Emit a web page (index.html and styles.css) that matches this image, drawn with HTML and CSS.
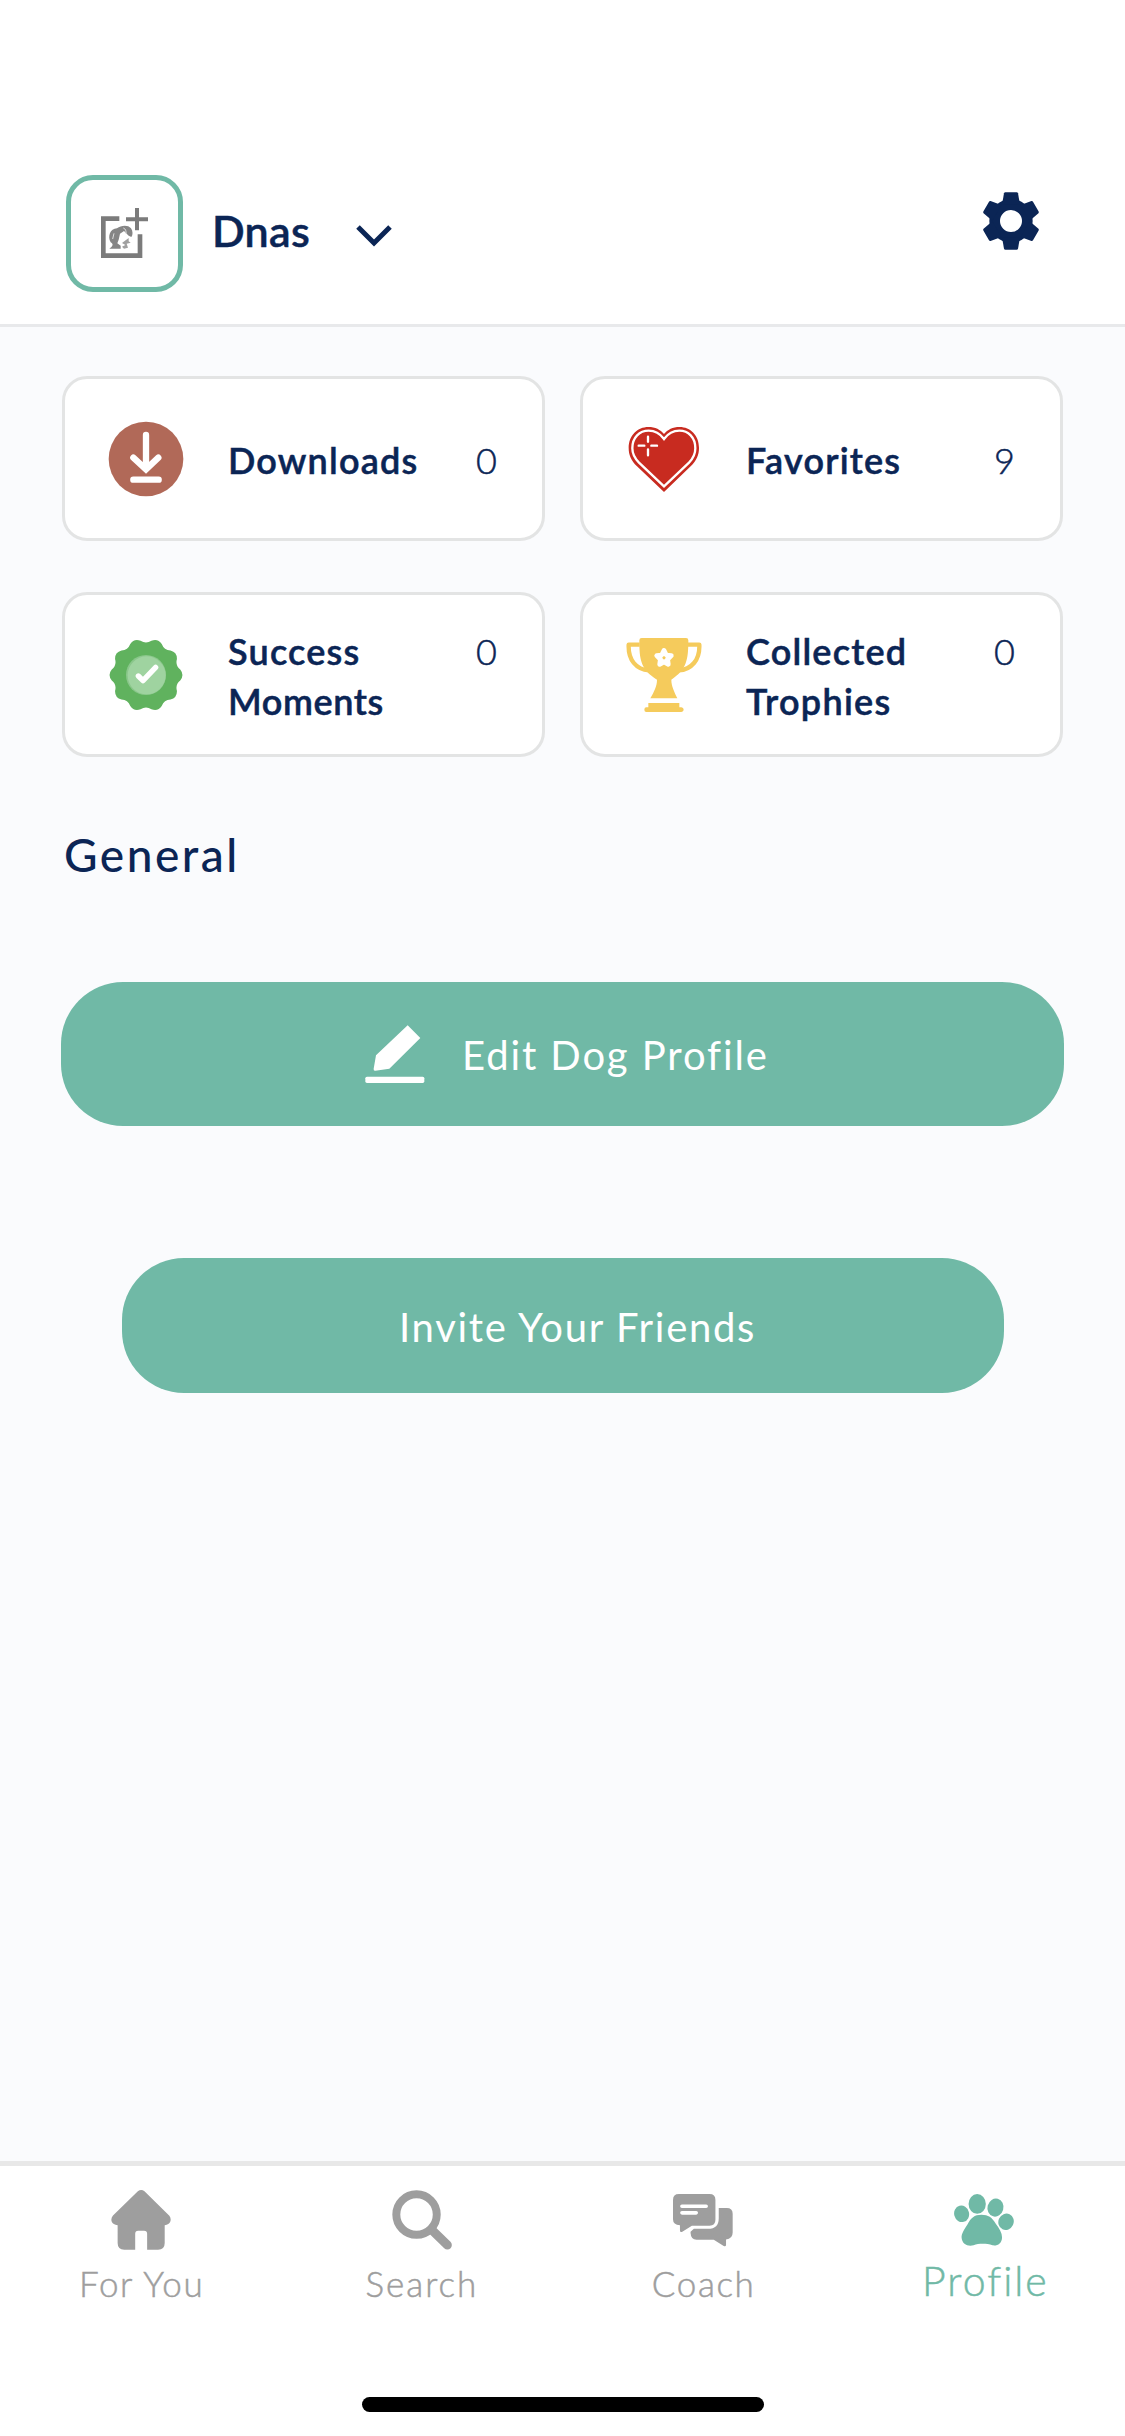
FILE: index.html
```html
<!DOCTYPE html>
<html lang="en">
<head>
<meta charset="utf-8">
<title>Profile</title>
<link rel="stylesheet" href="styles.css">
</head>
<body>
<div class="app">
  <header class="header">
    <div class="avatar">
      <svg width="48" height="50" viewBox="183 145 144 150" fill="none" stroke="#7b7b7b">
        <path d="M238 177H190V288H300V224" stroke-width="14"/>
        <path d="M291 145V212M258 179H324" stroke-width="12"/>
        <path d="M208 267C218 260 222 254 212 248C202 232 210 206 231 206C243 197 264 195 273 206C279 215 279 226 274 232L266 228L252 214L240 222L236 240L232 251L242 258V267Z" fill="#858585" stroke="none"/>
        <path d="M266 235V245L272 249L260 252L264 264L252 267L246 261L256 256L246 250Z" fill="#a0a0a0" stroke="none"/>
        <path d="M250 205C257 207 259 215 258 222M222 221L218 238" stroke="#dedede" stroke-width="3"/>
      </svg>
    </div>
    <div class="dog-name">Dnas</div>
    <svg class="chevron" width="36" height="22" viewBox="0 0 36 22" fill="none" stroke="#0b2555" stroke-width="5"><path d="M2 2L18 18L34 2"/></svg>
    <svg class="gear" width="58" height="58" viewBox="-87 -87 174 174" fill="#0b2555">
      <defs><path id="tooth" d="M-27 -49L-21 -83Q-20 -86 -17 -86H17Q20 -86 21 -83L27 -49Z"/></defs>
      <circle r="49" fill="none" stroke="#0b2555" stroke-width="32"/>
      <use href="#tooth"/><use href="#tooth" transform="rotate(60)"/><use href="#tooth" transform="rotate(120)"/>
      <use href="#tooth" transform="rotate(180)"/><use href="#tooth" transform="rotate(240)"/><use href="#tooth" transform="rotate(300)"/>
    </svg>
  </header>

  <main class="content">
    <section class="stats">
      <div class="card">
        <svg class="card-icon" viewBox="-114 -114 228 228">
          <circle r="112" fill="#b16958"/>
          <path d="M0 -72V28M-38 -4L0 31L37 -4M-38 62H38" fill="none" stroke="#fff" stroke-width="19" stroke-linecap="round"/>
        </svg>
        <div class="card-label downloads">Downloads</div><div class="card-count">0</div>
      </div>
      <div class="card">
        <svg class="card-icon" viewBox="170 183 228 228">
          <path d="M284 396L203 319C185 302 178 284 178 264C178 226 205 201 237 201C258 201 273 209 284 222C295 209 310 201 331 201C363 201 389 226 389 264C389 284 382 302 364 319Z" fill="#c82b20"/>
          <path d="M284 379L209 308C195 294 189 281 189 265C189 232 211 212 238 212C259 212 273 222 284 237C295 222 309 212 330 212C357 212 378 232 378 265C378 281 373 294 359 308Z" fill="none" stroke="#fff" stroke-width="7"/>
          <path d="M236 230V245M236 268V286M208 257H225M246 257H263" fill="none" stroke="#fff" stroke-width="7" stroke-linecap="round"/>
        </svg>
        <div class="card-label favorites">Favorites</div><div class="card-count">9</div>
      </div>
      <div class="card">
        <svg class="card-icon" viewBox="-114 -114 228 228">
          <path fill="#60b25e" d="M102.7 -16.3Q116 0 102.7 16.3Q87.5 28.4 92.7 47.2Q93.8 68.2 73.5 73.5Q54.1 74.4 47.2 92.7Q35.8 110.3 16.3 102.7Q0 92 -16.3 102.7Q-35.8 110.3 -47.2 92.7Q-54.1 74.4 -73.5 73.5Q-93.8 68.2 -92.7 47.2Q-87.5 28.4 -102.7 16.3Q-116 0 -102.7 -16.3Q-87.5 -28.4 -92.7 -47.2Q-93.8 -68.2 -73.5 -73.5Q-54.1 -74.4 -47.2 -92.7Q-35.8 -110.3 -16.3 -102.7Q0 -92 16.3 -102.7Q35.8 -110.3 47.2 -92.7Q54.1 -74.4 73.5 -73.5Q93.8 -68.2 92.7 -47.2Q87.5 -28.4 102.7 -16.3Z"/>
          <circle r="60" fill="#8ac78b"/><circle cx="2" cy="1" r="57" fill="#9fd3a0"/>
          <path d="M-23 3L-9 17L29 -23" fill="none" stroke="#fff" stroke-width="16" stroke-linecap="round" stroke-linejoin="round"/>
        </svg>
        <div class="card-label success">Success<br><span class="moments">Moments</span></div><div class="card-count">0</div>
      </div>
      <div class="card">
        <svg class="card-icon" viewBox="170 171 228 228" fill="#f5cb5c">
          <path d="M217 174H350Q357 174 357 181C357 239 352 269 306 299C306 319 315 335 324 355H243C254 335 263 319 263 299C214 269 210 239 210 181Q210 174 217 174Z"/>
          <path d="M211 194H178C176 240 201 269 239 271M356 194H390C392 240 366 269 328 271" fill="none" stroke="#f5cb5c" stroke-width="13" stroke-linejoin="round"/>
          <path d="M237 369H330V382H336Q343 383 343 389T336 396H231Q225 396 225 389T231 382H237Z"/>
          <path d="M284 211L291 225L306 227L295 238L297 253L284 246L271 253L273 238L262 227L277 225Z" fill="#fff" stroke="#fff" stroke-width="14" stroke-linejoin="round"/>
          <path d="M284 228L289 232L287 238H281L279 232Z"/>
        </svg>
        <div class="card-label collected">Collected<br><span class="trophies">Trophies</span></div><div class="card-count">0</div>
      </div>
    </section>

    <h2 class="section-title">General</h2>

    <button class="button button-edit">
      <svg width="60" height="60" viewBox="944 614 180 180" fill="#fff">
        <path d="M1072 618L1110 656L1017 748L975 754Q969 755 970 748L977 708Z"/>
        <rect x="945" y="772" width="177" height="19" rx="5"/>
      </svg>
      <span class="edit-text">Edit Dog Profile</span>
    </button>
    <button class="button button-invite"><span class="invite-text">Invite Your Friends</span></button>
  </main>

  <nav class="tabs">
    <div class="tab">
      <svg class="tab-icon" viewBox="182 120 181 181" fill="#9e9e9e">
        <path d="M263 124Q273 116 283 124L358 198Q364 205 361 215Q357 225 344 226V280Q344 300 324 300H291V252Q291 243 282 243H264Q255 243 255 252V300H222Q202 300 202 280V226Q188 225 184 215Q181 205 188 197Z"/>
      </svg>
      <span class="tab-label for-you">For You</span>
    </div>
    <div class="tab">
      <svg class="tab-icon" viewBox="1025 119 181 181" fill="none" stroke="#9e9e9e">
        <circle cx="1099" cy="193" r="61" stroke-width="24"/><path d="M1147 241L1192 285" stroke-width="27" stroke-linecap="round"/>
      </svg>
      <span class="tab-label search">Search</span>
    </div>
    <div class="tab">
      <svg class="tab-icon" viewBox="219 120 181 181" fill="#9e9e9e">
        <path d="M237 132H329Q347 132 347 150V210Q347 228 329 228H276L247 246Q240 249 240 242V226Q219 225 219 208V150Q219 132 237 132Z"/>
        <path d="M357 174H381Q399 174 399 192V248Q399 267 379 269V286Q378 292 372 289L342 270H290Q273 270 272 250V246L282 237H325Q357 237 357 205Z"/>
        <path d="M246 169H319M246 189H289" fill="none" stroke="#fff" stroke-width="11" stroke-linecap="round"/>
      </svg>
      <span class="tab-label coach">Coach</span>
    </div>
    <div class="tab active">
      <svg class="tab-icon" viewBox="1062 120 181 181" fill="#70b9a6">
        <ellipse cx="1085" cy="192" rx="22.500" ry="25" transform="rotate(-15 1085 192)"/>
        <ellipse cx="1132" cy="162" rx="26" ry="30"/>
        <ellipse cx="1187" cy="173" rx="24" ry="27.500" transform="rotate(15 1187 173)"/>
        <ellipse cx="1219" cy="216" rx="23" ry="25" transform="rotate(25 1219 216)"/>
        <path d="M1145 195C1165 195 1177 203 1188 222C1199 237 1207 250 1207 263C1206 281 1194 289 1178 287C1160 281 1137 281 1121 287C1103 291 1087 284 1085 265C1084 250 1094 238 1103 223C1113 205 1123 195 1145 195Z"/>
      </svg>
      <span class="tab-label profile">Profile</span>
    </div>
  </nav>
  <footer class="home-area"><div class="home-bar"></div></footer>
</div>
</body>
</html>
```
FILE: styles.css
```css
* { box-sizing: border-box; }

body {
  margin: 0;
  font-family: Lato, "Open Sans", sans-serif;
  color: #0b2555;
  background: #fff;
}

.app {
  width: 1125px;
  height: 2436px;
  display: flex;
  flex-direction: column;
}

.header {
  height: 327px;
  padding: 175px 85px 0 66px;
  display: flex;
  align-items: flex-start;
  border-bottom: 3px solid #e8e9eb;
}

.avatar {
  width: 117px;
  height: 117px;
  padding: 28px 0 0 30px;
  border: 5px solid #70b9a6;
  border-radius: 27px;
}

.avatar svg { display: block; }

.dog-name {
  margin: 30px 0 0 29px;
  width: 144px;
  font-size: 43px;
  line-height: 52px;
  font-weight: 600;
  letter-spacing: 0.3px;
  -webkit-text-stroke: 0.5px;
}

.chevron { margin-top: 50px; }
.gear { margin: 17px 0 0 auto; }

.content {
  flex: 1;
  padding: 49px 61px 0 62px;
  background: #fafbfd;
}

.stats {
  display: grid;
  grid-template-columns: 483px 483px;
  grid-auto-rows: 165px;
  gap: 51px 35px;
}

.card {
  padding: 0 45px 0 43px;
  display: flex;
  align-items: center;
  border: 3px solid #e3e4e4;
  border-radius: 25px;
  background: #fff;
}

.card-icon { width: 76px; height: 76px; margin-right: 44px; }

.card-label {
  flex: 1;
  padding-top: 2px;
  white-space: nowrap;
  font-size: 36px;
  line-height: 50px;
  font-weight: 600;
  letter-spacing: 1.200px;
  -webkit-text-stroke: 0.5px;
}

.moments { letter-spacing: 0.6px; }
.trophies { letter-spacing: 1.300px; }

.card-count {
  align-self: stretch;
  padding-top: 31px;
  font-size: 36px;
  line-height: 50px;
  font-weight: 300;
  -webkit-text-stroke: 0.5px;
}

.card:nth-child(-n+2) .card-count { padding-top: 56px; }

.section-title {
  margin: 70px 0 0 2px;
  font-size: 46px;
  line-height: 56px;
  font-weight: 500;
  letter-spacing: 2.500px;
}

.button {
  display: flex;
  align-items: center;
  border: 0;
  background: #70b9a6;
  color: #fff;
  font-family: inherit;
  font-size: 40px;
  line-height: 50px;
  white-space: nowrap;
}

.button-edit {
  width: 1003px;
  height: 144px;
  margin: 99px 0 0 -1px;
  padding: 0 0 0 304px;
  gap: 37px;
  border-radius: 62px;
  letter-spacing: 1.900px;
}

.edit-text { padding-top: 2px; }

.button-invite {
  width: 882px;
  height: 135px;
  margin: 132px 0 0 60px;
  padding: 2px 0 0 277px;
  border-radius: 62px;
  letter-spacing: 1.700px;
}

.tabs {
  height: 181px;
  display: grid;
  grid-template-columns: repeat(4, 1fr);
  border-top: 5px solid #e8e8e8;
}

.tab {
  padding-top: 24px;
  display: flex;
  flex-direction: column;
  align-items: center;
  color: #9e9e9e;
}

.tab-icon { width: 60px; height: 60px; }

.tab-label {
  margin-top: 11px;
  font-size: 35px;
  line-height: 44px;
  font-weight: 300;
  white-space: nowrap;
  letter-spacing: 2px;
  -webkit-text-stroke: 0.5px;
}

.for-you { padding-left: 2px; letter-spacing: 1.700px; }
.coach { padding-left: 1px; letter-spacing: 1.600px; }

.active { color: #70b9a6; }
.active .tab-label { margin-top: 9px; padding-left: 2px; font-size: 41px; }

.home-area {
  height: 94px;
  padding-top: 55px;
}

.home-bar {
  width: 402px;
  height: 15px;
  margin: 0 auto;
  border-radius: 8px;
  background: #000;
}
```
